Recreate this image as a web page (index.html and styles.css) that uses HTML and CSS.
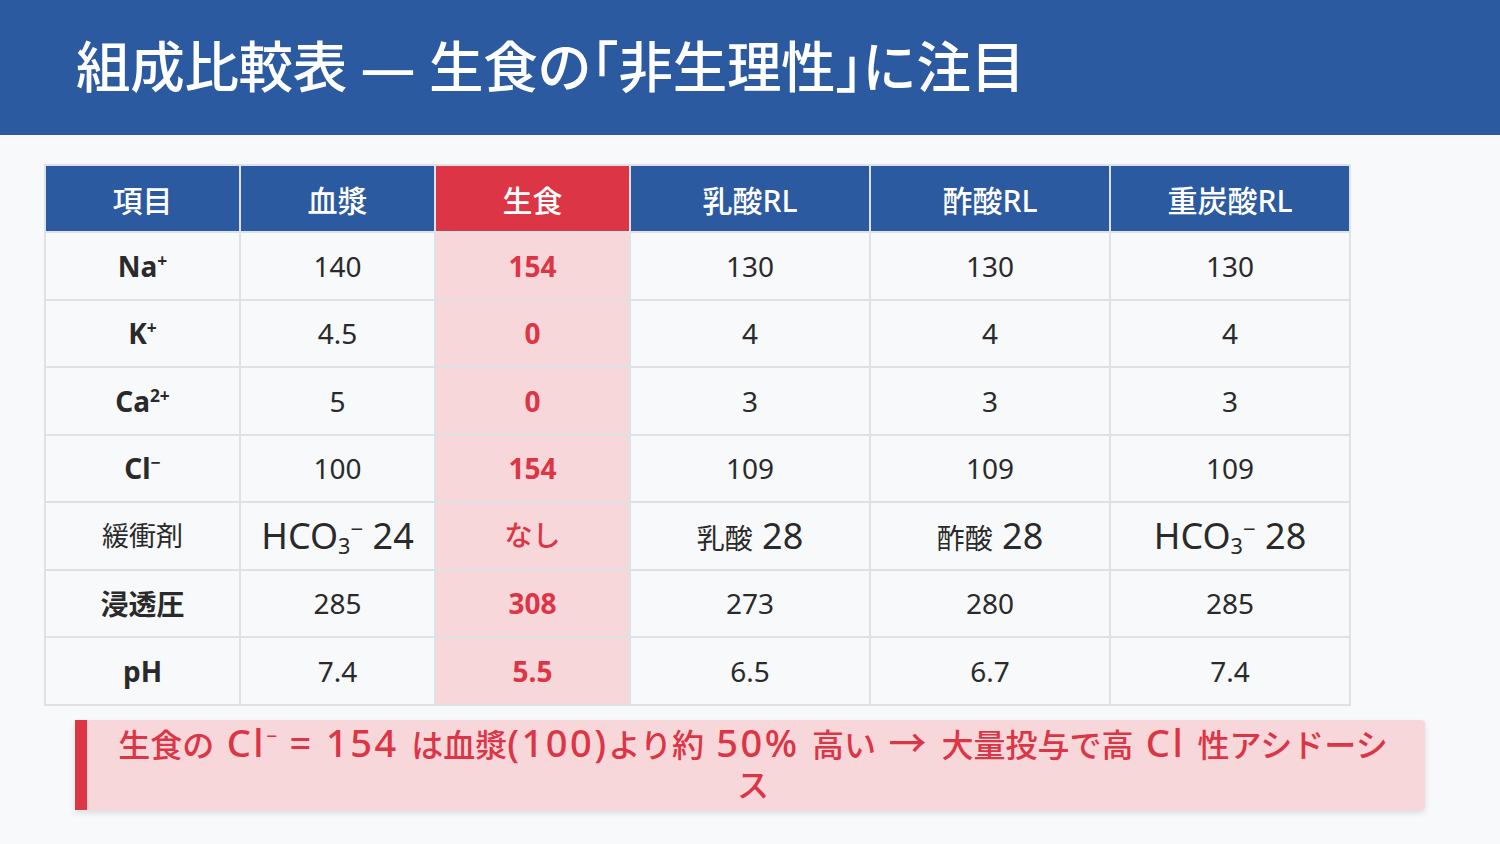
FILE: index.html
```html
<!DOCTYPE html>
<html lang="ja">
<head>
<meta charset="utf-8">
<link rel="stylesheet" href="styles.css">
</head>
<body>
<header class="top">
  <h1 class="title">組成比較表 — 生食の<span class="br">「</span>非生理性<span class="br">」</span>に注目</h1>
</header>
<main class="content">
  <table class="cmp">
    <thead>
      <tr>
        <th class="c1">項目</th>
        <th class="c1">血漿</th>
        <th class="c1 hl">生食</th>
        <th class="c2">乳酸RL</th>
        <th class="c2">酢酸RL</th>
        <th class="c2">重炭酸RL</th>
      </tr>
    </thead>
    <tbody>
      <tr><td class="lbl">Na<sup>+</sup></td><td>140</td><td class="hl">154</td><td>130</td><td>130</td><td>130</td></tr>
      <tr><td class="lbl">K<sup>+</sup></td><td>4.5</td><td class="hl">0</td><td>4</td><td>4</td><td>4</td></tr>
      <tr><td class="lbl">Ca<sup>2+</sup></td><td>5</td><td class="hl">0</td><td>3</td><td>3</td><td>3</td></tr>
      <tr><td class="lbl">Cl<sup>−</sup></td><td>100</td><td class="hl">154</td><td>109</td><td>109</td><td>109</td></tr>
      <tr class="big">
        <td class="lbl plain">緩衝剤</td>
        <td><span class="en">HCO<sub>3</sub><sup>−</sup> 24</span></td>
        <td class="hl">なし</td>
        <td>乳酸<span class="en"> 28</span></td>
        <td>酢酸<span class="en"> 28</span></td>
        <td><span class="en">HCO<sub>3</sub><sup>−</sup> 28</span></td>
      </tr>
      <tr><td class="lbl">浸透圧</td><td>285</td><td class="hl">308</td><td>273</td><td>280</td><td>285</td></tr>
      <tr><td class="lbl">pH</td><td>7.4</td><td class="hl">5.5</td><td>6.5</td><td>6.7</td><td>7.4</td></tr>
    </tbody>
  </table>
  <div class="note">生食の<span class="en"> Cl<sup>−</sup> = 154 </span>は血漿<span class="en">(100)</span>より約<span class="en"> 50% </span>高い<span class="en"> → </span>大量投与で高<span class="en"> Cl </span>性アシドーシス</div>
</main>
</body>
</html>
```
FILE: styles.css
```css
* { box-sizing: border-box; }
html, body { margin: 0; padding: 0; }
body {
  width: 1500px;
  height: 844px;
  overflow: hidden;
  background: #f7f9fb;
  font-family: "Noto Sans", "Noto Sans CJK JP", sans-serif;
  color: #2a2a2a;
}
.top {
  height: 135px;
  background: #2c5aa0;
  display: flex;
  align-items: center;
  padding-left: 76px;
}
.title {
  margin: 0;
  color: #fff;
  font-family: "Noto Sans", "Noto Sans CJK JP", sans-serif;
  font-size: 54.5px;
  font-weight: 500;
  letter-spacing: -0.3px;
  padding-bottom: 8px;
}
.title .br {
  font-feature-settings: "halt";
}
.content {
  padding: 29px 0 0 44px;
}
.cmp {
  border-collapse: collapse;
  table-layout: fixed;
  width: 1306px;
}
.cmp th, .cmp td {
  border: 2px solid #dee2e6;
  text-align: center;
  vertical-align: middle;
  padding: 0;
}
.cmp th {
  background: #2c5aa0;
  color: #fff;
  font-weight: 500;
  font-size: 30px;
  height: 67px;
}
.cmp th.c1 { width: 195px; }
.cmp th.c2 { width: 240px; }
.cmp th.hl { background: #dc3545; }
.cmp td {
  height: 67.5px;
  font-size: 28px;
  color: #2a2a2a;
  background: #f7f9fb;
}
.cmp td.hl {
  background: #f8d7da;
  color: #dc3545;
  font-weight: 700;
}
.cmp td.lbl { font-weight: 700; }
.cmp td.lbl.plain { font-weight: 400; font-size: 27px; }
.cmp tr.big td { font-size: 28px; line-height: 1.2; }
.cmp tr.big td.hl { font-weight: 500; }
.cmp tr.big .en { font-size: 36px; }
sup { font-size: 0.62em; vertical-align: 0.55em; line-height: 0; }
sub { font-size: 0.6em; vertical-align: -0.25em; line-height: 0; }
.note {
  margin: 14px 0 0 31px;
  width: 1350px;
  min-height: 90px;
  background: #f8d7da;
  border-left: 12px solid #dc3545;
  border-radius: 0 4px 4px 0;
  box-shadow: 0 3px 6px rgba(0,0,0,0.12);
  color: #dc3545;
  font-size: 32px;
  font-weight: 500;
  line-height: 40px;
  text-align: center;
  padding: 3px 34px 5px 28px;
}
.note .en { font-size: 38px; line-height: 38px; letter-spacing: 2.5px; }
.note sup { font-size: 0.5em; vertical-align: 0.75em; letter-spacing: 0; }
```
